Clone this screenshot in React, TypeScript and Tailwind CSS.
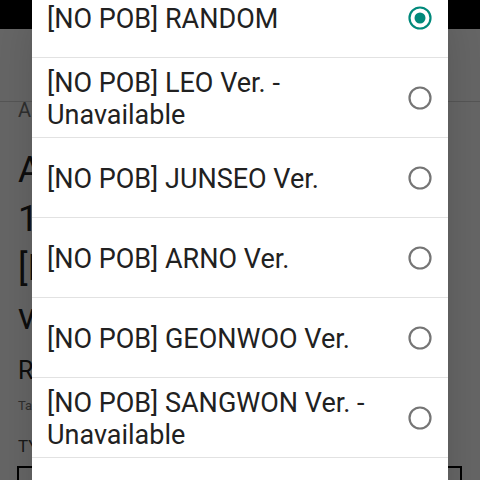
import React from "react";

const options = [
  { label: "[NO POB] RANDOM", checked: true },
  { label: "[NO POB] LEO Ver. - Unavailable" },
  { label: "[NO POB] JUNSEO Ver." },
  { label: "[NO POB] ARNO Ver." },
  { label: "[NO POB] GEONWOO Ver." },
  { label: "[NO POB] SANGWON Ver. - Unavailable" },
  { label: "" },
];

function Radio({ checked }: { checked?: boolean }) {
  return (
    <svg width="24" height="24" viewBox="0 0 24 24" className="shrink-0">
      <circle
        cx="12"
        cy="12"
        r="10.5"
        fill="none"
        stroke={checked ? "#00897b" : "#757575"}
        strokeWidth="2.2"
      />
      {checked && <circle cx="12" cy="12" r="5.5" fill="#00897b" />}
    </svg>
  );
}

export default function App() {
  return (
    <div
      className="relative w-[480px] h-[480px] overflow-hidden bg-white"
      style={{ fontFamily: "Roboto, 'Liberation Sans', sans-serif" }}
    >
      {/* underlying page */}
      <div className="flex flex-col">
        <div className="h-[29px] bg-black" />
        <div className="h-[73px] border-b border-[#d6d6d6]" />
        <div className="px-[18px] flex flex-col">
          <div className="text-[20px] leading-[16px] text-[#757575]">Albums</div>
          <div className="mt-[28px] text-[36px] leading-[49px] text-[#212121]">
            <div className="whitespace-nowrap">ALBUM BAE173</div>
            <div className="whitespace-nowrap">1ST SINGLE</div>
            <div className="whitespace-nowrap">[INTERSECTION]</div>
            <div className="whitespace-nowrap">ver.</div>
          </div>
          <div className="mt-[14px] text-[25px] leading-[30px] text-[#212121]">RM 59.90</div>
          <div className="mt-[12px] text-[13px] leading-[16px] text-[#757575]">Tax included.</div>
          <div className="mt-[22px] text-[17px] leading-[20px] text-[#424242]">TYPE</div>
          <div className="mt-[10px] h-[48px] w-[445px] -ml-px border-2 border-black" />
        </div>
      </div>

      {/* scrim */}
      <div className="absolute inset-0 bg-black/60" />

      {/* dialog */}
      <div className="absolute left-[32px] top-[-22px] w-[416px] bg-white shadow-2xl">
        {options.map((o, i) => (
          <div
            key={i}
            className="h-[80px] border-b border-[#e2e2e2] flex items-center pl-[15px] pr-[16px] gap-[14px]"
          >
            <div className="flex-1 pt-[2px] text-[27px] leading-[32px] text-[#212121]">{o.label}</div>
            {o.label && <Radio checked={o.checked} />}
          </div>
        ))}
      </div>
    </div>
  );
}
